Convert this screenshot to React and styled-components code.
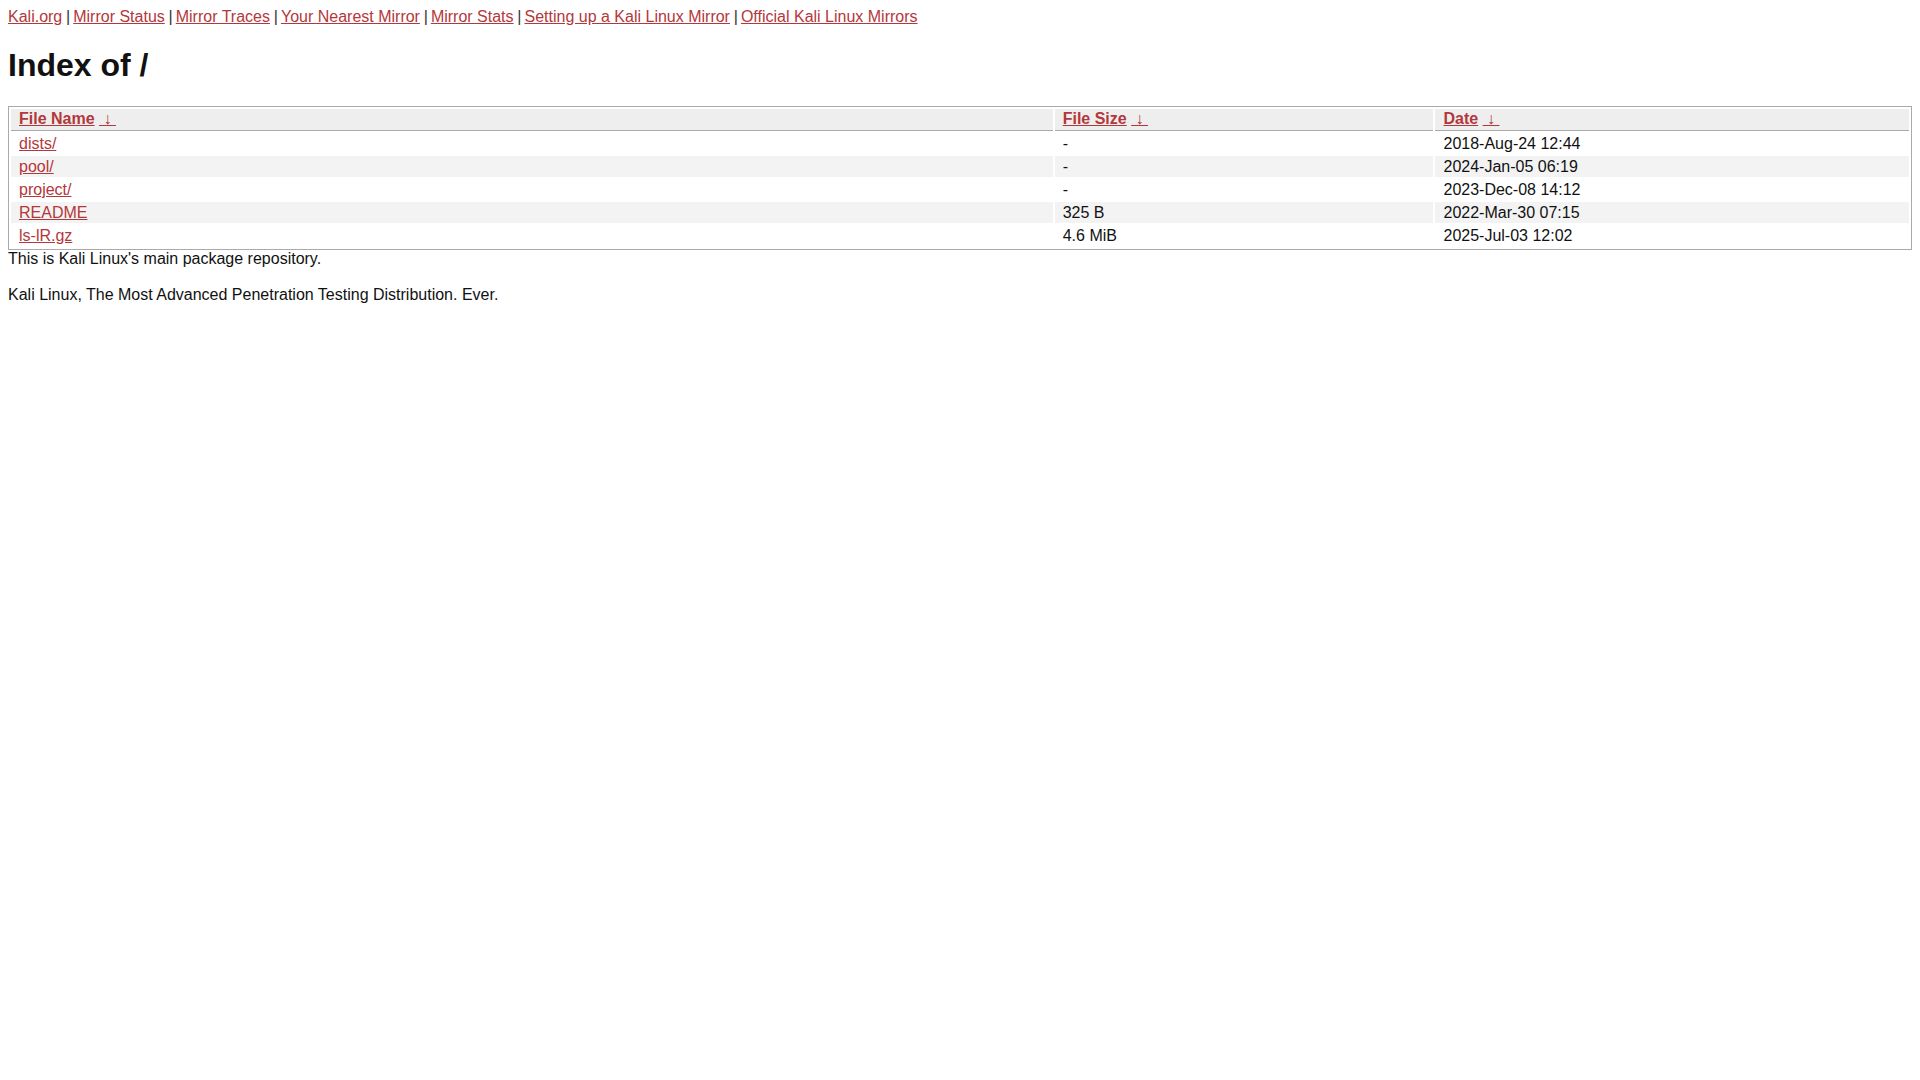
import React from "react";
import styled, { createGlobalStyle } from "styled-components";

const GlobalStyle = createGlobalStyle`
	body {
		margin: 8px;
		background: #fff;
		color: #111;
		font-family: "Liberation Sans", Arial, sans-serif;
		font-size: 16px;
	}
`;

const Link = styled.a`
	color: #b3373b;
	text-decoration: underline;
	font-weight: ${(props) => (props.bold ? 700 : 400)};
`;

const NavBar = styled.div`
	line-height: normal;
`;

const Pipe = styled.span`
	color: #333;
	letter-spacing: -0.7px;
`;

const Title = styled.h1`
	font-size: 2em;
	font-weight: 700;
	margin: 0.67em 0;
`;

const Table = styled.table`
	width: 100%;
	border: 1px solid #aaa;
	border-spacing: 2px;
	padding-bottom: 1px;
`;

const HeadCell = styled.th`
	text-align: left;
	background: #eee;
	border-bottom: 1px solid #aaa;
	padding: 0 8px 2px;
	line-height: 19px;
	width: ${(props) => props.width};
`;

const Row = styled.tr`
	background: ${(props) => (props.shaded ? "#f3f3f3" : "#fff")};
`;

const Cell = styled.td`
	padding: 1px 8px;
	line-height: 19px;
`;

const Footer = styled.div`
	line-height: normal;
`;

const navLinks = [
	"Kali.org",
	"Mirror Status",
	"Mirror Traces",
	"Your Nearest Mirror",
	"Mirror Stats",
	"Setting up a Kali Linux Mirror",
	"Official Kali Linux Mirrors",
];

const files = [
	{ name: "dists/", size: "-", date: "2018-Aug-24 12:44" },
	{ name: "pool/", size: "-", date: "2024-Jan-05 06:19" },
	{ name: "project/", size: "-", date: "2023-Dec-08 14:12" },
	{ name: "README", size: "325 B", date: "2022-Mar-30 07:15" },
	{ name: "ls-lR.gz", size: "4.6 MiB", date: "2025-Jul-03 12:02" },
];

const columns = [
	{ label: "File Name", width: "55%" },
	{ label: "File Size", width: "20%" },
	{ label: "Date", width: "25%" },
];

const App = () => {
	return (
		<>
			<GlobalStyle />
			<NavBar>
				{navLinks.map((label, i) => (
					<React.Fragment key={label}>
						{i > 0 && <Pipe> | </Pipe>}
						<Link href="#">{label}</Link>
					</React.Fragment>
				))}
			</NavBar>
			<Title>Index of /</Title>
			<Table>
				<thead>
					<tr>
						{columns.map((col) => (
							<HeadCell key={col.label} width={col.width}>
								<Link bold href="#">{col.label}</Link>{" "}
								<Link bold href="#">&nbsp;↓&nbsp;</Link>
							</HeadCell>
						))}
					</tr>
				</thead>
				<tbody>
					{files.map((file, i) => (
						<Row key={file.name} shaded={i % 2 === 1}>
							<Cell>
								<Link href="#">{file.name}</Link>
							</Cell>
							<Cell>{file.size}</Cell>
							<Cell>{file.date}</Cell>
						</Row>
					))}
				</tbody>
			</Table>
			<Footer>
				This is Kali Linux's main package repository.
				<br />
				<br />
				Kali Linux, The Most Advanced Penetration Testing Distribution. Ever.
			</Footer>
		</>
	);
};

export default App;
